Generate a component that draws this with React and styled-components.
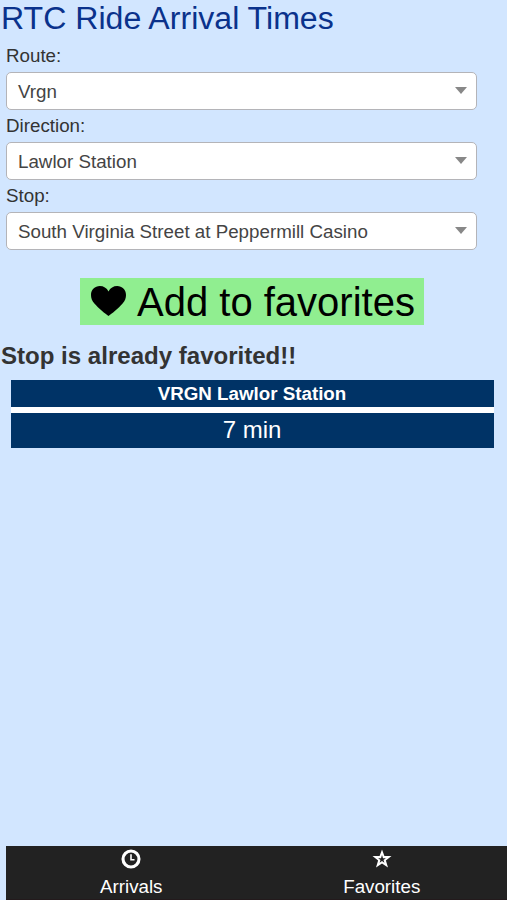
import React from 'react'
import styled, { createGlobalStyle } from "styled-components";

const GlobalStyle = createGlobalStyle`
    * {
      box-sizing: border-box;
    }

    body {
      margin: 0;
      background: #d2e6ff;
      color: #333;
      font-family: "Liberation Sans", Arial, sans-serif;
      font-size: 18.75px;
      overflow: hidden;
    }
`;

const Page = styled.div`
    display: flex;
    flex-direction: column;
    height: 100vh;
`;

const Title = styled.h1`
    margin: 0;
    padding-left: 1px;
    height: 41px;
    line-height: 36px;
    font-size: 32.1px;
    font-weight: 400;
    color: #0a328c;
    white-space: nowrap;
`;

const Form = styled.div`
    width: 477px;
    padding-left: 6px;
`;

const Field = styled.div`
    height: 70px;
`;

const Label = styled.label`
    display: block;
    height: 31px;
    line-height: 30px;
`;

const Select = styled.div`
    display: flex;
    align-items: center;
    justify-content: space-between;
    height: 38px;
    padding: 1px 9px 0 11px;
    color: #444;
    background: #fff;
    border: 1px solid #b4b4b8;
    border-radius: 5px;
`;

const Caret = styled.span`
    margin-bottom: 2px;
    border-style: solid;
    border-width: 7px 6px 0;
    border-color: #888 transparent transparent;
`;

const FavoriteButton = styled.button`
    display: flex;
    align-items: center;
    align-self: flex-start;
    width: 344px;
    height: 47px;
    margin: 27px 0 0 80px;
    padding: 2px 0 0 10px;
    gap: 10px;
    border: 0;
    background: #90ee90;
    color: #000;
    font-family: inherit;
    font-size: 40px;
    line-height: 45px;
    white-space: nowrap;

    svg {
      margin-bottom: 4px;
    }
`;

const Message = styled.h3`
    margin: 14px 0 0 1px;
    height: 40px;
    line-height: 34px;
    font-size: 24.05px;
    font-weight: 700;
`;

const Arrivals = styled.div`
    display: flex;
    flex-direction: column;
    gap: 6px;
    width: 483px;
    margin: 1px 0 0 11px;
    background: #fff;
    color: #fff;
    text-align: center;
`;

const ArrivalsHead = styled.div`
    height: 27px;
    line-height: 27px;
    padding-right: 1px;
    font-weight: 700;
    background: #003366;
`;

const ArrivalsTime = styled.div`
    height: 35px;
    line-height: 34px;
    padding-right: 1px;
    font-size: 24px;
    background: #003366;
`;

const NavBar = styled.nav`
    display: flex;
    height: 54px;
    margin: auto 0 0 6px;
    background: #222;
    border-bottom: 1px solid #231a1c;
`;

const NavItem = styled.a`
    display: flex;
    flex-direction: column;
    align-items: center;
    width: 251px;
    padding-top: 3px;
    color: #fff;
    line-height: 22px;

    svg {
      margin-bottom: 7px;
    }
`;

const HeartIcon = () => (
  <svg width="37" height="32" viewBox="0 0 37 32" fill="currentColor">
    <path d="M18.5 31C15.5 29.2 8.5 23.3 4.4 18.6C2 15.8 1 13.3 1 10C1 4.6 5 1 9.8 1C13.6 1 16.7 3 18.5 6.4C20.3 3 23.4 1 27.2 1C32 1 36 4.6 36 10C36 13.3 35 15.8 32.6 18.6C28.5 23.3 21.5 29.2 18.5 31Z" />
  </svg>
)

const ClockIcon = () => (
  <svg width="20" height="20" viewBox="0 0 20 20" fill="none" stroke="currentColor">
    <circle cx="10" cy="10" r="8" strokeWidth="3.1" />
    <path d="M10 5.3V10.8H13.5" strokeWidth="1.6" />
  </svg>
)

const StarIcon = () => (
  <svg width="20" height="20" viewBox="0 0 20 20" fill="currentColor" fillRule="evenodd">
    <path d="M10 .4L12.4 7.1H19.5L13.9 11.4L16 18.4L10 14.4L4 18.4L6.1 11.4L.5 7.1H7.6ZM10 6L9 9.2H6.1L8.5 11L7.6 13.8L10 12.1L12.4 13.8L11.5 11L13.9 9.2H11Z" />
  </svg>
)

const fields = [
  {
    id: 1,
    label: "Route:",
    value: "Vrgn",
  },
  {
    id: 2,
    label: "Direction:",
    value: "Lawlor Station",
  },
  {
    id: 3,
    label: "Stop:",
    value: "South Virginia Street at Peppermill Casino",
  }
]

const App = () => {
  return (
    <Page>
      <GlobalStyle />
      <Title>RTC Ride Arrival Times</Title>

      <Form>
        {
          fields.map((item) => {
            return (
              <Field key={item.id}>
                <Label>{item.label}</Label>
                <Select>
                  {item.value}
                  <Caret />
                </Select>
              </Field>
            )
          })
        }
      </Form>

      <FavoriteButton>
        <HeartIcon />
        Add to favorites
      </FavoriteButton>

      <Message>Stop is already favorited!!</Message>

      <Arrivals>
        <ArrivalsHead>VRGN Lawlor Station</ArrivalsHead>
        <ArrivalsTime>7 min</ArrivalsTime>
      </Arrivals>

      <NavBar>
        <NavItem>
          <ClockIcon />
          Arrivals
        </NavItem>
        <NavItem>
          <StarIcon />
          Favorites
        </NavItem>
      </NavBar>
    </Page>
  )
}

export default App
